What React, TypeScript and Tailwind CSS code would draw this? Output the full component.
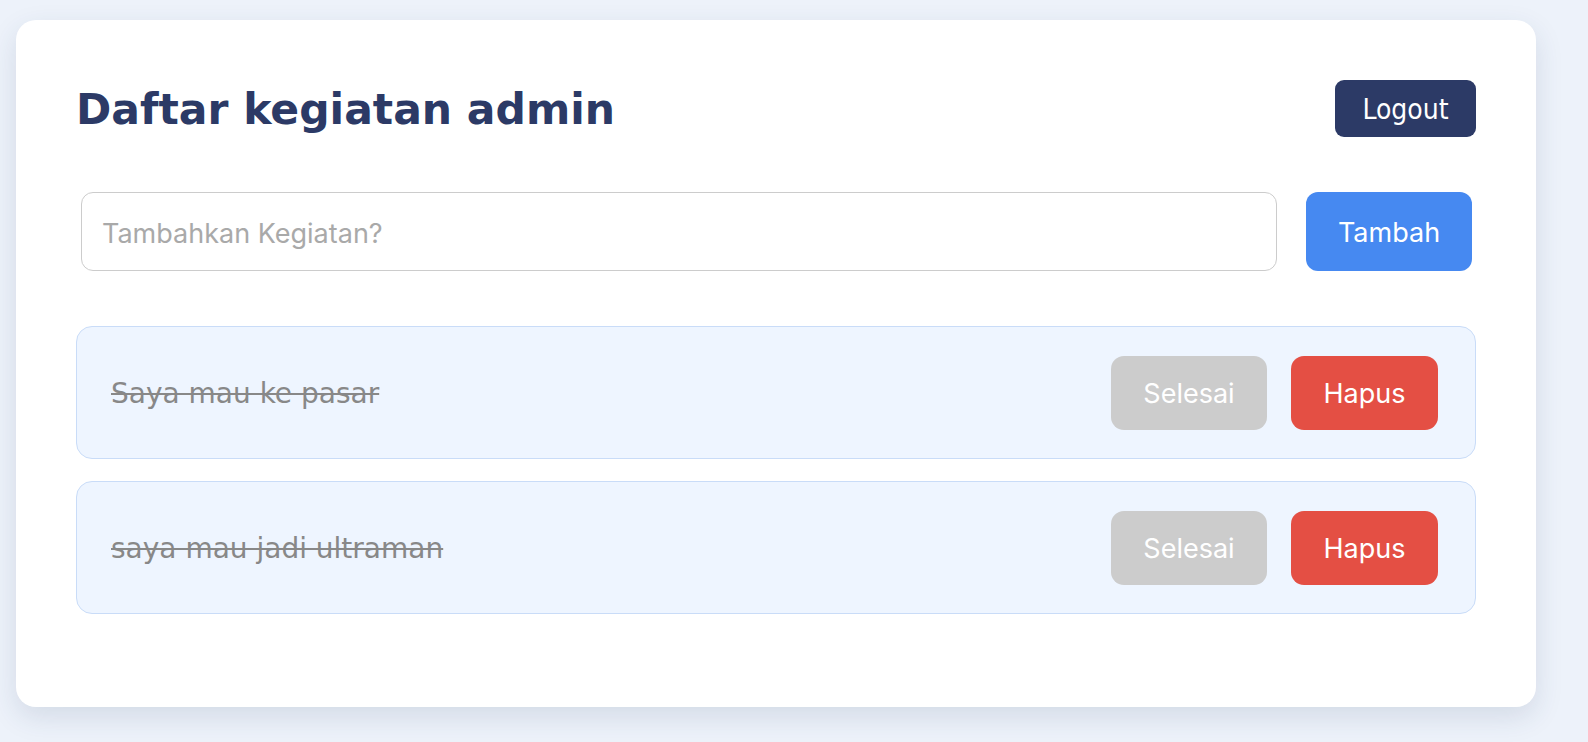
import { useState } from "react";

interface Kegiatan {
  id: number;
  text: string;
  done: boolean;
}

const tahoma = "font-['Tahoma','DejaVu_Sans',sans-serif]";
const tahomaNarrow = "font-['Tahoma','DejaVu_Sans_Condensed','DejaVu_Sans',sans-serif]";
const system = "font-['Inter','Roboto','Liberation_Sans',sans-serif]";

export default function App() {
  const [input, setInput] = useState("");
  const [items, setItems] = useState<Kegiatan[]>([
    { id: 1, text: "Saya mau ke pasar", done: true },
    { id: 2, text: "saya mau jadi ultraman", done: true },
  ]);

  const tambah = () => {
    if (!input.trim()) return;
    setItems([...items, { id: Date.now(), text: input, done: false }]);
    setInput("");
  };

  return (
    <div className="min-h-screen bg-[#edf2fa] pt-5 pl-4">
      <div className="w-[1520px] rounded-[20px] bg-white px-[60px] pt-[60px] pb-[93px] shadow-[0_10px_28px_rgba(40,60,100,0.13)]">
        {/* Header */}
        <div className="flex h-[57px] items-center justify-between">
          <h1 className={`${tahoma} pt-[4px] text-[42.5px] leading-none font-bold text-[#2c3a66]`}>
            Daftar kegiatan admin
          </h1>
          <button
            className={`${tahomaNarrow} h-[57px] w-[141px] rounded-[9px] bg-[#2c3a66] pt-[3px] text-[28px] text-white`}
          >
            Logout
          </button>
        </div>

        {/* Input */}
        <div className="mt-[55px] flex gap-[29px] pr-[4px] pl-[5px]">
          <input
            value={input}
            onChange={(e) => setInput(e.target.value)}
            placeholder="Tambahkan Kegiatan?"
            className={`${system} h-[79px] flex-1 rounded-[12px] border border-[#cccccc] px-[20px] pt-[3px] text-[27px] text-[#333] placeholder-[#a9a9a9] outline-none`}
          />
          <button
            onClick={tambah}
            className={`${system} h-[79px] w-[166px] rounded-[12px] bg-[#4689f1] pt-[3px] text-[27px] text-white`}
          >
            Tambah
          </button>
        </div>

        {/* List */}
        <div className="mt-[55px] flex flex-col gap-[22px]">
          {items.map((item) => (
            <div
              key={item.id}
              className="flex h-[133px] items-center justify-between rounded-[16px] border border-[#c9dcf8] bg-[#eef5ff] pr-[37px] pl-[34px]"
            >
              <span
                className={`${tahoma} pt-[3px] text-[28px] ${item.done ? "text-[#888888] line-through" : "text-[#333]"}`}
              >
                {item.text}
              </span>
              <div className="flex gap-[24px]">
                <button
                  className={`${system} h-[74px] w-[156px] rounded-[13px] bg-[#cccccc] pt-[3px] text-[27px] text-white`}
                >
                  Selesai
                </button>
                <button
                  onClick={() => setItems(items.filter((i) => i.id !== item.id))}
                  className={`${system} h-[74px] w-[147px] rounded-[13px] bg-[#e44f44] pt-[3px] text-[27px] text-white`}
                >
                  Hapus
                </button>
              </div>
            </div>
          ))}
        </div>
      </div>
    </div>
  );
}
